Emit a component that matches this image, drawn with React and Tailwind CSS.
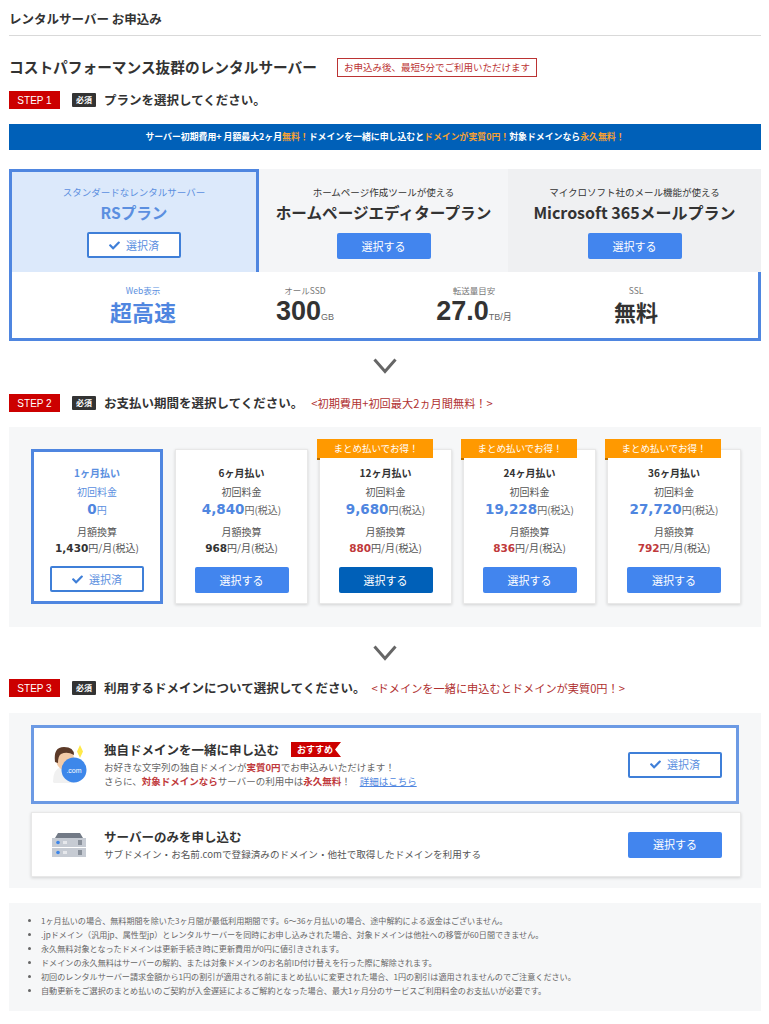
import { FaCheck } from 'react-icons/fa';

const font = { jp: "font-['Noto_Sans_CJK_JP','Liberation_Sans',sans-serif]" };

const periods = [
  { name: '1ヶ月払い', first: '0', firstTax: false, monthly: '1,430', selected: true },
  { name: '6ヶ月払い', first: '4,840', firstTax: true, monthly: '968' },
  { name: '12ヶ月払い', first: '9,680', firstTax: true, monthly: '880', ribbon: true, red: true, dark: true },
  { name: '24ヶ月払い', first: '19,228', firstTax: true, monthly: '836', ribbon: true, red: true },
  { name: '36ヶ月払い', first: '27,720', firstTax: true, monthly: '792', ribbon: true, red: true },
];

const notes = [
  '1ヶ月払いの場合、無料期間を除いた3ヶ月間が最低利用期間です。6～36ヶ月払いの場合、途中解約による返金はございません。',
  '.jpドメイン（汎用jp、属性型jp）とレンタルサーバーを同時にお申し込みされた場合、対象ドメインは他社への移管が60日間できません。',
  '永久無料対象となったドメインは更新手続き時に更新費用が0円に値引きされます。',
  'ドメインの永久無料はサーバーの解約、または対象ドメインのお名前ID付け替えを行った際に解除されます。',
  '初回のレンタルサーバー請求金額から1円の割引が適用される前にまとめ払いに変更された場合、1円の割引は適用されませんのでご注意ください。',
  '自動更新をご選択のまとめ払いのご契約が入金遅延によるご解約となった場合、最大1ヶ月分のサービスご利用料金のお支払いが必要です。',
];

function SelectBtn({ dark }) {
  return (
    <button className={`w-[94px] h-[26px] rounded-[2px] text-white text-[11px] ${dark ? 'bg-[#0060b8]' : 'bg-[#4285ee]'}`}>
      選択する
    </button>
  );
}

function SelectedBtn() {
  return (
    <button className="w-[94px] h-[26px] rounded-[2px] bg-white border-2 border-[#3f7fd8] text-[#5b8fe0] text-[11px] flex items-center justify-center gap-[6px]">
      <FaCheck className="text-[11px] text-[#3f7fd8]" />
      選択済
    </button>
  );
}

function Step({ n, title, sub, gap }) {
  return (
    <div className="flex items-center h-[18px]">
      <div className="w-[51px] h-[18px] bg-[#cc0000] text-white text-[10px] flex items-center justify-center shrink-0 font-['Liberation_Sans',sans-serif]">STEP {n}</div>
      <div className="ml-3 w-[24px] h-[14px] bg-[#333] text-white text-[8px] font-bold flex items-center justify-center rounded-[1px] shrink-0">必須</div>
      <div className="ml-[8px] text-[12.5px] font-bold text-[#333] whitespace-nowrap">{title}</div>
      {sub && <div className={`text-[11.2px] text-[#b03030] whitespace-nowrap ${gap}`}>{sub}</div>}
    </div>
  );
}

function Chevron() {
  return (
    <div className="flex justify-center pr-[1px]">
      <svg width="24" height="16" viewBox="0 0 24 16" fill="none">
        <path d="M1.5 1.5 L12 13.5 L22.5 1.5" stroke="#666" strokeWidth="3" />
      </svg>
    </div>
  );
}

function Spec({ label, value, unit, blue, big, className }) {
  return (
    <div className={`w-[162px] flex flex-col items-center ${className}`}>
      <div className={`text-[8.5px] leading-[12px] ${blue ? 'text-[#5b8fe0]' : 'text-[#777]'}`}>{label}</div>
      <div className={`mt-[1px] leading-[28px] font-bold whitespace-nowrap ${big ? "text-[27px] font-['Liberation_Sans','Noto_Sans_CJK_JP',sans-serif]" : 'text-[22px]'} ${blue ? 'text-[#4f86e0]' : 'text-[#333]'}`}>
        {value}
        {unit && <span className="text-[9px] font-normal text-[#666]">{unit}</span>}
      </div>
    </div>
  );
}

function PeriodCard({ p }) {
  return (
    <div className={`relative flex flex-col items-center h-[155px] bg-white ${p.selected ? 'w-[132px] border-[3px] border-[#4f86e0] pt-[14px]' : 'border border-[#e8e8e8] shadow-[0_1px_3px_rgba(0,0,0,0.15)] pt-[16px]'}`}>
      {p.ribbon && (
        <div className="absolute left-[-3px] top-[-11px] w-[116px] h-[19px] bg-[#ff9900] text-white text-[9.5px] flex items-center justify-center pl-[2px]">
          まとめ払いでお得！
          <span className="absolute left-0 bottom-[-2px] w-[3px] h-[2px] bg-[#b56d00]" />
        </div>
      )}
      <div className={`text-[10px] font-bold leading-[14px] ${p.selected ? 'text-[#5b8fe0]' : 'text-[#333]'}`}>{p.name}</div>
      <div className={`mt-[5px] text-[10px] leading-[14px] ${p.selected ? 'text-[#5b8fe0]' : 'text-[#555]'}`}>初回料金</div>
      <div className="h-[20px] flex items-baseline text-[#666] text-[10px] leading-[20px]">
        <span className="text-[13.5px] font-bold text-[#4f86e0] font-['DejaVu_Sans',sans-serif]">{p.first}</span>
        <span className={p.selected ? 'text-[#5b8fe0]' : ''}>円</span>
        {p.firstTax && '(税込)'}
      </div>
      <div className="mt-[6px] text-[10px] leading-[14px] text-[#555]">月額換算</div>
      <div className="mt-[1px] h-[15px] flex items-baseline text-[#555] text-[10px] leading-[15px]">
        <span className={`text-[10.5px] font-bold font-['DejaVu_Sans',sans-serif] ${p.red ? 'text-[#c0393b]' : 'text-[#333]'}`}>{p.monthly}</span>
        円/月(税込)
      </div>
      <div className="mt-[11px]">{p.selected ? <SelectedBtn /> : <SelectBtn dark={p.dark} />}</div>
    </div>
  );
}

export default function App() {
  return (
    <div className={`w-[769px] h-[1024px] overflow-hidden bg-white pl-[9px] pr-[8px] text-[#333] ${font.jp}`}>
      <div className="h-[36px] pt-[10px] border-b border-[#d9d9d9] text-[12.5px] font-bold leading-[17px]">レンタルサーバー お申込み</div>

      <div className="mt-[22px] h-[18px] flex items-center">
        <div className="w-[328px] text-[14.7px] font-bold whitespace-nowrap">コストパフォーマンス抜群のレンタルサーバー</div>
        <div className="w-[200px] h-[19px] border border-[#b33] text-[#b33] text-[9.5px] flex items-center justify-center whitespace-nowrap">お申込み後、最短5分でご利用いただけます</div>
      </div>

      <div className="mt-[15px]">
        <Step n={1} title="プランを選択してください。" />
      </div>

      <div className="mt-[15px] h-[26px] bg-[#0060b8] flex items-center justify-center text-[8.9px] font-bold text-white whitespace-nowrap">
        サーバー初期費用+ 月額最大2ヶ月<span className="text-[#f5a033]">無料！</span>ドメインを一緒に申し込むと<span className="text-[#f5a033]">ドメインが実質0円！</span>対象ドメインなら<span className="text-[#f5a033]">永久無料！</span>
      </div>

      {/* plan tabs */}
      <div className="mt-[19px] relative">
        <div className="grid grid-cols-[250px_249px_253px] h-[100px]">
          <div className="relative z-10 h-[103px] bg-[#dce9fb] border-[3px] border-b-0 border-[#4f86e0] flex flex-col items-center pt-[13px]">
            <div className="text-[9.5px] leading-[14px] text-[#5b8fe0]">スタンダードなレンタルサーバー</div>
            <div className="mt-[2px] text-[15.6px] font-bold leading-[22px] text-[#5b8fe0]">RSプラン</div>
            <div className="mt-[9px]"><SelectedBtn /></div>
          </div>
          <div className="bg-[#f4f5f7] flex flex-col items-center pt-[16px]">
            <div className="text-[9.5px] leading-[14px]">ホームページ作成ツールが使える</div>
            <div className="mt-[2px] text-[15.6px] font-bold leading-[22px] whitespace-nowrap">ホームページエディタープラン</div>
            <div className="mt-[9px]"><SelectBtn /></div>
          </div>
          <div className="bg-[#eff0f2] flex flex-col items-center pt-[16px]">
            <div className="text-[9.5px] leading-[14px]">マイクロソフト社のメール機能が使える</div>
            <div className="mt-[2px] text-[16px] font-bold leading-[22px] whitespace-nowrap">Microsoft 365メールプラン</div>
            <div className="mt-[9px]"><SelectBtn /></div>
          </div>
        </div>
        <div className="h-[72px] bg-white border-[3px] border-[#4f86e0] flex pt-[12px] pl-[50px]">
          <Spec blue label="Web表示" value="超高速" />
          <Spec big label="オールSSD" value="300" unit="GB" />
          <Spec big label="転送量目安" value="27.0" unit="TB/月" className="ml-[7px]" />
          <Spec label="SSL" value="無料" />
        </div>
      </div>

      <div className="mt-[17px]"><Chevron /></div>

      {/* step 2 */}
      <div className="mt-[20px]">
        <Step n={2} title="お支払い期間を選択してください。" sub="<初期費用+初回最大2ヵ月間無料！>" gap="ml-[8px]" />
      </div>
      <div className="mt-[15px] h-[200px] bg-[#f6f7f8] pt-[22px] pl-[22px]">
        <div className="grid grid-cols-[133px_133px_133px_133px_134px] gap-x-[11px]">
          {periods.map(p => <PeriodCard key={p.name} p={p} />)}
        </div>
      </div>

      <div className="mt-[18px]"><Chevron /></div>

      {/* step 3 */}
      <div className="mt-[18px]">
        <Step n={3} title="利用するドメインについて選択してください。" sub="<ドメインを一緒に申込むとドメインが実質0円！>" gap="ml-[6px]" />
      </div>
      <div className="mt-[16px] h-[175px] bg-[#f6f7f8] pt-[12px] pl-[22px]">
        <div className="h-[79px] w-[708px] bg-white border-[3px] border-[#6c9ae4] flex items-center pl-[18px] pr-[14px]">
          <svg width="36" height="39" viewBox="0 0 36 39" className="shrink-0">
            <path d="M1 37 Q1 24 9 22 L22 34 L22 38 L2 38 Z" fill="#f1f1f1" />
            <ellipse cx="13" cy="14" rx="9" ry="11" fill="#f3cba8" />
            <path d="M3 17 Q1 2 12 2 Q22 2 22 10 Q15 6 9 9 Q6 11 6 18 Z" fill="#5c3a28" />
            <path d="M28 0 L31 6.5 L28 13 L25 6.5 Z" fill="#ffe94a" />
            <circle cx="22" cy="25" r="12.5" fill="#3d87ea" />
            <text x="22" y="28" textAnchor="middle" fontSize="7" fill="#fff" fontFamily="Liberation Sans">.com</text>
          </svg>
          <div className="ml-[16px] flex-1 pb-[2px]">
            <div className="flex items-center">
              <span className="text-[12.5px] font-bold leading-[20px]">独自ドメインを一緒に申し込む</span>
              <span className="ml-[12px] h-[15px] w-[50px] bg-[#cc0000] text-white text-[9px] font-bold flex items-center pl-[6px] [clip-path:polygon(0_0,100%_0,88%_50%,100%_100%,0_100%)]">おすすめ</span>
            </div>
            <div className="text-[9.5px] leading-[14px] text-[#666]">
              お好きな文字列の独自ドメインが<span className="text-[#c0393b] font-bold">実質0円</span>でお申込みいただけます！
            </div>
            <div className="text-[9.5px] leading-[14px] text-[#666]">
              さらに、<span className="text-[#c0393b] font-bold">対象ドメインなら</span>サーバーの利用中は<span className="text-[#c0393b] font-bold">永久無料</span>！
              <span className="ml-[9px] text-[#4f86e0] underline">詳細はこちら</span>
            </div>
          </div>
          <SelectedBtn />
        </div>
        <div className="mt-[8px] h-[65px] w-[710px] bg-white border border-[#e8e8e8] shadow-[0_1px_3px_rgba(0,0,0,0.15)] flex items-center pl-[20px] pr-[18px]">
          <svg width="34" height="24" viewBox="0 0 34 24" className="shrink-0">
            <path d="M3 5 L6 0 H28 L31 5 Z" fill="#727a86" />
            <rect x="0" y="5" width="34" height="9" fill="#c6cbd3" />
            <rect x="0" y="15" width="34" height="9" fill="#c6cbd3" />
            <circle cx="6" cy="9.5" r="1.8" fill="#3d87ea" />
            <circle cx="6" cy="19.5" r="1.8" fill="#3d87ea" />
            <rect x="11" y="8" width="4" height="3" fill="#e6e8ec" />
            <rect x="11" y="18" width="4" height="3" fill="#e6e8ec" />
            <rect x="26" y="7" width="4" height="5" fill="#8b929c" />
            <rect x="26" y="17" width="4" height="5" fill="#8b929c" />
          </svg>
          <div className="ml-[18px] flex-1 pb-[2px]">
            <div className="text-[12.5px] font-bold leading-[20px]">サーバーのみを申し込む</div>
            <div className="text-[9.6px] leading-[14px] text-[#555]">サブドメイン・お名前.comで登録済みのドメイン・他社で取得したドメインを利用する</div>
          </div>
          <SelectBtn />
        </div>
      </div>

      {/* notes */}
      <div className="mt-[15px] h-[108px] bg-[#f6f7f8] pt-[11px] pl-[21px]">
        <ul className="text-[8.1px] leading-[14px] text-[#666] list-disc pl-[11px] whitespace-nowrap">
          {notes.map(n => <li key={n}>{n}</li>)}
        </ul>
      </div>
    </div>
  );
}
